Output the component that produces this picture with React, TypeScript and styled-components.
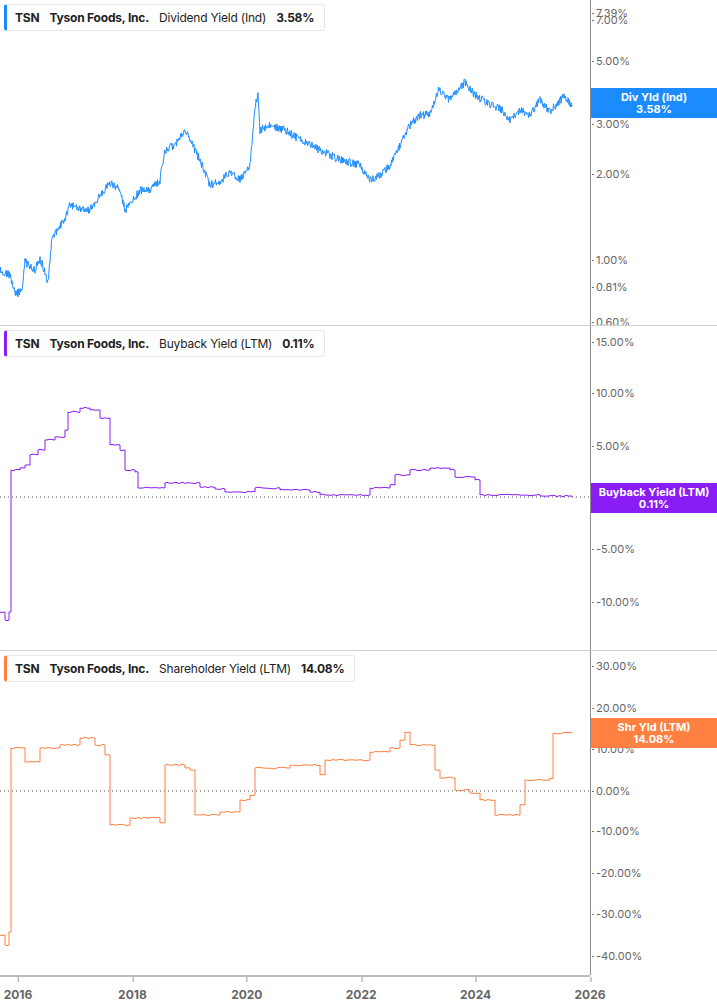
import React from 'react'
import styled, { createGlobalStyle } from 'styled-components'

const Global = createGlobalStyle`
  body { margin: 0; background: #fff; font-family: Inter, "Liberation Sans", Arial, sans-serif; }
`

const CHART_W = 590

const Page = styled.div`
  width: 717px;
  height: 1005px;
  display: flex;
  flex-direction: column;
  overflow: hidden;
`

const PanelBox = styled.div<{ h: number; top?: boolean }>`
  position: relative;
  height: ${({ h }) => h}px;
  display: flex;
  border-top: ${({ top }) => (top ? 'none' : '1px solid #d0d0d0')};
`

const Plot = styled.svg`
  width: ${CHART_W}px;
  height: 100%;
  display: block;
  flex: none;
`

const Axis = styled.div`
  position: relative;
  flex: 1;
  border-left: 1px solid #8c8c8c;
`

const Tick = styled.div`
  position: absolute;
  left: 5px;
  font-size: 11px;
  color: #666;
  transform: translateY(-50%);
  white-space: nowrap;
  &::before {
    content: '';
    position: absolute;
    left: -4px;
    top: 50%;
    width: 2px;
    height: 1px;
    background: #777;
  }
`

const Badge = styled.div<{ color: string }>`
  position: absolute;
  left: 0;
  right: 0;
  height: 30px;
  background: ${({ color }) => color};
  color: #fff;
  font-size: 11px;
  font-weight: 700;
  line-height: 12px;
  text-align: center;
  display: flex;
  flex-direction: column;
  justify-content: center;
`

const Legend = styled.div<{ color: string }>`
  position: absolute;
  left: 4px;
  top: 4px;
  height: 25px;
  display: flex;
  align-items: center;
  gap: 10px;
  padding: 0 10px 0 8px;
  background: #fff;
  border: 1px solid #e8e8e8;
  border-left: 3px solid ${({ color }) => color};
  border-radius: 3px;
  font-size: 12px;
  letter-spacing: -0.2px;
  color: #222;
`

const B = styled.span`
  font-weight: 700;
`

const XAxis = styled.div`
  position: relative;
  height: 30px;
  width: ${CHART_W}px;
  border-top: 2px solid #bdbdbd;
`

const Year = styled.div`
  position: absolute;
  top: 10px;
  font-size: 12px;
  font-weight: 700;
  color: #666;
  transform: translateX(-50%);
  &::before {
    content: '';
    position: absolute;
    left: 50%;
    top: -10px;
    width: 1px;
    height: 5px;
    background: #999;
  }
`

type Pt = [number, number]

const rnd = (i: number) => {
  const s = Math.sin(i * 127.1 + 311.7) * 43758.5453
  return s - Math.floor(s)
}

// linear path between key points with jitter, a few samples per pixel
const noisy = (pts: Pt[], amp: number, offset: number): string => {
  const out: string[] = []
  let n = 0
  for (let k = 0; k < pts.length - 1; k++) {
    const [x0, y0] = pts[k]
    const [x1, y1] = pts[k + 1]
    for (let x = x0; x < x1; x += 0.5) {
      const t = (x - x0) / (x1 - x0)
      const y = y0 + (y1 - y0) * t + (rnd(n++) - 0.5) * amp * 2
      out.push(`${x},${(y - offset).toFixed(1)}`)
    }
  }
  const last = pts[pts.length - 1]
  out.push(`${last[0]},${last[1] - offset}`)
  return out.join(' ')
}

const steps = (pts: Pt[], offset: number): string => {
  const out: string[] = []
  for (let k = 0; k < pts.length; k++) {
    const [x, y] = pts[k]
    if (k > 0) out.push(`${x},${pts[k - 1][1] - offset}`)
    out.push(`${x},${y - offset}`)
    if (k < pts.length - 1) {
      const nx = pts[k + 1][0]
      for (let xi = x + 2; xi < nx; xi += 3) {
        out.push(`${xi},${(y - offset + (rnd(xi) - 0.5) * 1.6).toFixed(1)}`)
      }
    }
  }
  return out.join(' ')
}

const divPts: Pt[] = [
  [0, 270], [10, 275], [15, 295], [22, 290], [25, 262], [35, 270], [40, 258], [48, 282], [52, 238],
  [58, 230], [65, 218], [70, 205], [80, 210], [90, 210], [100, 195], [110, 183], [120, 190], [125, 210],
  [130, 205], [140, 190], [150, 190], [160, 180], [165, 150], [175, 145], [185, 128], [190, 140],
  [200, 160], [210, 185], [220, 182], [230, 172], [240, 180], [250, 165], [256, 100], [258, 96],
  [260, 130], [270, 125], [285, 130], [300, 140], [320, 150], [340, 160], [360, 165], [370, 180],
  [380, 175], [390, 165], [400, 145], [410, 125], [420, 115], [430, 115], [438, 90], [450, 100],
  [465, 82], [475, 95], [490, 105], [500, 108], [510, 120], [520, 110], [530, 115], [540, 100],
  [550, 112], [560, 100], [565, 97], [572, 105],
]

const buyPts: Pt[] = [
  [0, 612], [5, 620], [9, 612], [11, 470], [20, 468], [25, 465], [30, 455], [38, 450], [45, 440],
  [55, 437], [65, 430], [68, 412], [80, 408], [90, 410], [100, 418], [110, 445], [120, 450],
  [125, 470], [135, 472], [138, 488], [160, 488], [165, 483], [190, 483], [200, 487], [215, 489],
  [225, 492], [240, 492], [255, 488], [280, 490], [310, 492], [320, 495], [365, 495], [370, 488],
  [390, 485], [395, 475], [410, 470], [430, 468], [450, 470], [455, 477], [475, 480], [480, 495],
  [540, 496], [572, 497],
]

const shrPts: Pt[] = [
  [0, 935], [5, 945], [9, 932], [11, 748], [20, 748], [25, 762], [35, 762], [40, 748], [60, 745],
  [80, 738], [90, 738], [95, 745], [105, 755], [110, 825], [130, 818], [160, 823], [165, 765],
  [185, 768], [190, 770], [195, 815], [220, 812], [235, 812], [240, 800], [250, 795], [255, 768],
  [270, 768], [290, 765], [310, 765], [320, 775], [325, 760], [350, 760], [370, 752], [390, 748],
  [400, 740], [405, 732], [410, 745], [428, 745], [435, 770], [440, 778], [455, 790], [470, 793],
  [480, 800], [495, 815], [505, 815], [520, 805], [525, 780], [550, 778], [553, 733], [572, 732],
]

type PanelProps = {
  top: number
  h: number
  first?: boolean
  color: string
  metric: string
  value: string
  line: string
  zero?: number
  ticks: [string, number][]
  badge: [string, string, number]
}

const Panel = ({ top, h, first, color, metric, value, line, zero, ticks, badge }: PanelProps) => (
  <PanelBox h={h} top={first}>
    <Plot viewBox={`0 0 ${CHART_W} ${h}`}>
      {zero !== undefined && (
        <line x1={0} x2={CHART_W} y1={zero - top} y2={zero - top} stroke="#555" strokeWidth={1} strokeDasharray="1 3" />
      )}
      <polyline points={line} fill="none" stroke={color} strokeWidth={1} strokeLinejoin="round" />
    </Plot>
    <Axis>
      {ticks.map(([t, y]) => (
        <Tick key={t} style={{ top: y - top }}>{t}</Tick>
      ))}
      <Badge color={color} style={{ top: badge[2] - top }}>
        <span>{badge[0]}</span>
        <span>{badge[1]}</span>
      </Badge>
    </Axis>
    <Legend color={color}>
      <B>TSN</B>
      <B>Tyson Foods, Inc.</B>
      <span>{metric}</span>
      <B>{value}</B>
    </Legend>
  </PanelBox>
)

const years = ['2016', '2018', '2020', '2022', '2024', '2026']

export default function App() {
  return (
    <Page>
      <Global />
      <Panel
        top={0}
        h={325}
        first
        color="#1a8cff"
        metric="Dividend Yield (Ind)"
        value="3.58%"
        line={noisy(divPts, 4, 0)}
        ticks={[['7.39%', 13], ['7.00%', 20], ['5.00%', 61], ['3.00%', 124], ['2.00%', 174], ['1.00%', 260], ['0.81%', 287], ['0.60%', 322]]}
        badge={['Div Yld (Ind)', '3.58%', 88]}
      />
      <Panel
        top={326}
        h={324}
        color="#8a1cf5"
        metric="Buyback Yield (LTM)"
        value="0.11%"
        line={steps(buyPts, 326)}
        zero={497}
        ticks={[['15.00%', 342], ['10.00%', 393], ['5.00%', 446], ['0.00%', 497], ['-5.00%', 549], ['-10.00%', 602]]}
        badge={['Buyback Yield (LTM)', '0.11%', 483]}
      />
      <Panel
        top={651}
        h={324}
        color="#ff8040"
        metric="Shareholder Yield (LTM)"
        value="14.08%"
        line={steps(shrPts, 651)}
        zero={791}
        ticks={[['30.00%', 666], ['20.00%', 708], ['10.00%', 749], ['0.00%', 791], ['-10.00%', 831], ['-20.00%', 873], ['-30.00%', 914], ['-40.00%', 956]]}
        badge={['Shr Yld (LTM)', '14.08%', 718]}
      />
      <XAxis>
        {years.map((y, i) => (
          <Year key={y} style={{ left: 18 + i * 114.4 }}>{y}</Year>
        ))}
      </XAxis>
    </Page>
  )
}
